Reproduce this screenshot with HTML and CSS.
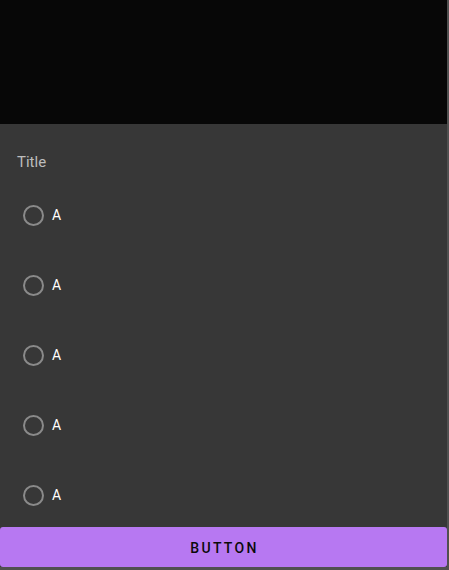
FILE: index.html
```html
<!DOCTYPE html>
<html>
<head>
<meta charset="utf-8">
<link rel="stylesheet" href="styles.css">
</head>
<body>
<div class="screen">
  <div class="scrim"></div>
  <div class="sheet">
    <div class="title">Title</div>
    <div class="options">
      <div class="option"><span class="radio"></span><span class="label">A</span></div>
      <div class="option"><span class="radio"></span><span class="label">A</span></div>
      <div class="option"><span class="radio"></span><span class="label">A</span></div>
      <div class="option"><span class="radio"></span><span class="label">A</span></div>
      <div class="option"><span class="radio"></span><span class="label">A</span></div>
    </div>
    <button class="btn">BUTTON</button>
  </div>
</div>
</body>
</html>
```
FILE: styles.css
```css
html, body {
  margin: 0;
  padding: 0;
}
body {
  width: 449px;
  height: 570px;
  background: #505050;
  font-family: Roboto, "Liberation Sans", sans-serif;
  overflow: hidden;
}
.screen {
  width: 447px;
  height: 567px;
  display: flex;
  flex-direction: column;
}
.scrim {
  height: 124px;
  background: #070707;
  flex: none;
}
.sheet {
  flex: 1;
  background: #373737;
  display: flex;
  flex-direction: column;
}
.title {
  padding: 28px 0 0 17px;
  height: 20px;
  line-height: 20px;
  font-size: 15px;
  color: #bdbdbd;
}
.options {
  margin-top: 19px;
  display: flex;
  flex-direction: column;
  gap: 22px;
}
.option {
  height: 48px;
  display: flex;
  align-items: center;
}
.radio {
  box-sizing: border-box;
  width: 21px;
  height: 21px;
  margin-left: 23px;
  border: 2px solid #8a8a8a;
  border-radius: 50%;
}
.label {
  margin-left: 8px;
  font-size: 14px;
  font-weight: 400;
  color: #ffffff;
}
.btn {
  margin-top: auto;
  height: 40px;
  border: none;
  border-radius: 3px;
  background: #b778f2;
  color: #0a0a0a;
  font-family: Roboto, "Liberation Sans", sans-serif;
  font-size: 14px;
  font-weight: 500;
  letter-spacing: 2.3px;
  padding: 2px 0 0 2px;
}
```
